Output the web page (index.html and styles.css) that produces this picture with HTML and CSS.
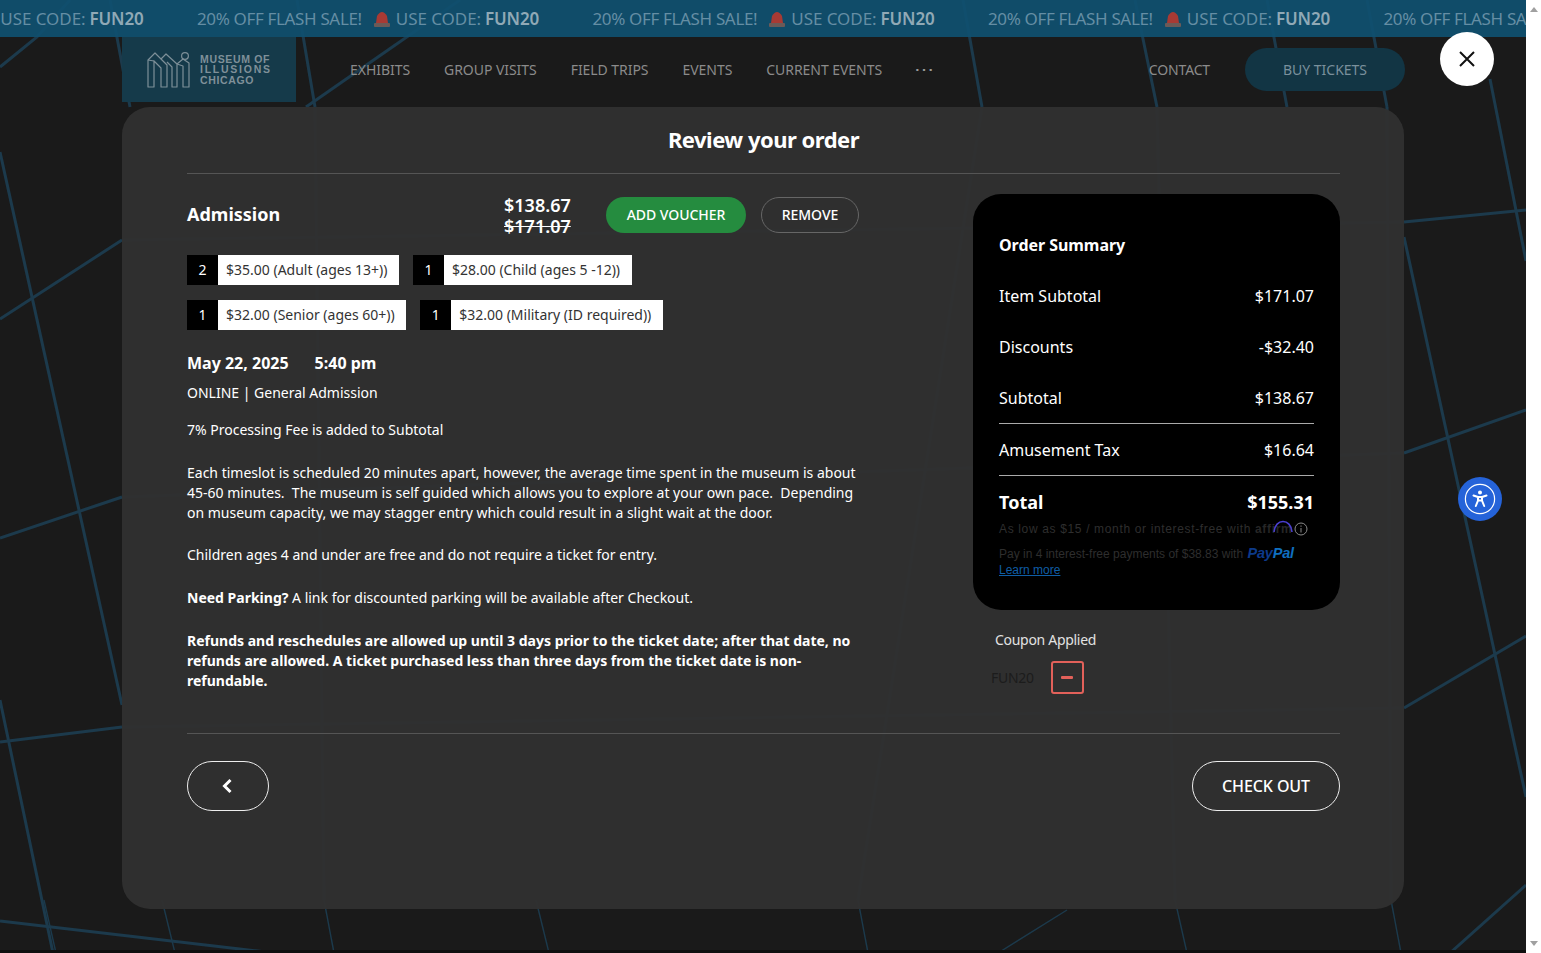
FILE: index.html
```html
<!DOCTYPE html>
<html lang="en">
<head>
<meta charset="utf-8">
<title>Review your order</title>
<link rel="stylesheet" href="styles.css">
</head>
<body>
<div class="window">
  <div class="viewport">
    <svg class="backdrop" viewBox="0 0 1526 953" width="1526" height="953" aria-hidden="true">
      <g class="lines">
        <path d="M0 152 L122 705"/><path d="M0 319 L122 240"/><path d="M0 538 L122 497"/><path d="M0 742 L122 727"/>
        <path d="M0 700 L53 953"/><path d="M0 921 L275 953"/><path d="M0 67 L37 37 L70 0"/>
        <path d="M110 0 L130 107"/><path d="M297 0 L315 107"/><path d="M460 0 L306 107"/>
        <path d="M963 0 L982 107"/><path d="M1135 0 L1157 107"/><path d="M1267 0 L1287 107"/><path d="M1367 0 L1387 107"/>
        <path d="M1490 79 L1526 261"/><path d="M1404 222 L1526 210"/><path d="M1404 237 L1526 797"/>
        <path d="M1404 453 L1526 410"/><path d="M1404 708 L1526 636"/><path d="M1450 953 L1526 885"/>
        <path d="M122 240 L1404 222"/><path d="M122 497 L1404 453"/><path d="M122 727 L1404 708"/>
        <path d="M315 107 L324 900"/><path d="M982 107 L858 900"/><path d="M1157 107 L1175 900"/><path d="M1387 107 L1391 900"/>
      </g>
      <g class="lines-thin">
        <path d="M44 900 L56 953"/><path d="M162 900 L175 953"/><path d="M324 900 L334 953"/><path d="M536 900 L549 953"/>
        <path d="M858 900 L868 953"/><path d="M1067 910 L998 953"/><path d="M1175 900 L1187 953"/><path d="M1391 900 L1401 953"/>
      </g>
    </svg>
    <div class="banner">
      <div class="ticker">
        <span class="tick">20% OFF FLASH SALE!<svg class="siren" viewBox="0 0 18 18"><path d="M3 13 L4 6 Q9 -2 14 6 L15 13 Z" fill="#a83a34"/><rect x="1" y="13" width="16" height="4" rx="1" fill="#6b5a58"/></svg><span class="code">USE CODE:</span><b>FUN20</b></span>
        <span class="tick">20% OFF FLASH SALE!<svg class="siren" viewBox="0 0 18 18"><path d="M3 13 L4 6 Q9 -2 14 6 L15 13 Z" fill="#a83a34"/><rect x="1" y="13" width="16" height="4" rx="1" fill="#6b5a58"/></svg><span class="code">USE CODE:</span><b>FUN20</b></span>
        <span class="tick">20% OFF FLASH SALE!<svg class="siren" viewBox="0 0 18 18"><path d="M3 13 L4 6 Q9 -2 14 6 L15 13 Z" fill="#a83a34"/><rect x="1" y="13" width="16" height="4" rx="1" fill="#6b5a58"/></svg><span class="code">USE CODE:</span><b>FUN20</b></span>
        <span class="tick">20% OFF FLASH SALE!<svg class="siren" viewBox="0 0 18 18"><path d="M3 13 L4 6 Q9 -2 14 6 L15 13 Z" fill="#a83a34"/><rect x="1" y="13" width="16" height="4" rx="1" fill="#6b5a58"/></svg><span class="code">USE CODE:</span><b>FUN20</b></span>
        <span class="tick">20% OFF FLASH SALE!<svg class="siren" viewBox="0 0 18 18"><path d="M3 13 L4 6 Q9 -2 14 6 L15 13 Z" fill="#a83a34"/><rect x="1" y="13" width="16" height="4" rx="1" fill="#6b5a58"/></svg><span class="code">USE CODE:</span><b>FUN20</b></span>
      </div>
    </div>
    <div class="shell">
      <header class="site-header">
        <a class="logo">
          <svg class="logo-mark" viewBox="0 0 44 38" fill="none" stroke="#7d8f98" stroke-width="1.2" stroke-linejoin="round">
            <path d="M1 9 L8 2 L20 14 L20 36 L14 36 L14 17 L7 10 L7 36 L1 36 Z"/>
            <path d="M1 9 L7 10"/>
            <path d="M14 8 L19 3 L30 13 L30 36 L25 36 L25 16 L20 11"/>
            <path d="M30 13 L36 8 L42 12 L42 36 L36 36 L36 15 L30 13"/>
            <circle cx="38" cy="5" r="3.4"/>
          </svg>
          <span class="logo-text"><span class="logo-a">MUSEUM OF</span><span class="logo-b">ILLUSIONS</span><span class="logo-a">CHICAGO</span></span>
        </a>
        <nav class="nav">
          <a>EXHIBITS</a><a>GROUP VISITS</a><a>FIELD TRIPS</a><a>EVENTS</a><a>CURRENT EVENTS</a><span class="dots">&#8943;</span>
        </nav>
        <a class="contact">CONTACT</a>
        <a class="buy">BUY TICKETS</a>
      </header>
      <main class="card">
        <h1 class="title">Review your order</h1>
        <div class="columns">
          <section class="details">
            <div class="item-head">
              <h2 class="item-name">Admission</h2>
              <div class="prices"><span>$138.67</span><s>$171.07</s></div>
              <button class="btn-voucher">ADD VOUCHER</button>
              <button class="btn-remove">REMOVE</button>
            </div>
            <div class="tickets">
              <div class="ticket"><span class="qty">2</span><span class="label">$35.00 (Adult (ages 13+))</span></div>
              <div class="ticket"><span class="qty">1</span><span class="label">$28.00 (Child (ages 5 -12))</span></div>
            </div>
            <div class="tickets">
              <div class="ticket"><span class="qty">1</span><span class="label">$32.00 (Senior (ages 60+))</span></div>
              <div class="ticket"><span class="qty">1</span><span class="label">$32.00 (Military (ID required))</span></div>
            </div>
            <div class="when"><span>May 22, 2025</span><span>5:40 pm</span></div>
            <p class="kind">ONLINE | General Admission</p>
            <div class="notes">
              <p>7% Processing Fee is added to Subtotal</p>
              <p>Each timeslot is scheduled 20 minutes apart, however, the average time spent in the museum is about 45-60 minutes.&nbsp; The museum is self guided which allows you to explore at your own pace.&nbsp; Depending on museum capacity, we may stagger entry which could result in a slight wait at the door.</p>
              <p>Children ages 4 and under are free and do not require a ticket for entry.</p>
              <p><b>Need Parking?</b> A link for discounted parking will be available after Checkout.</p>
              <p><b>Refunds and reschedules are allowed up until 3 days prior to the ticket date; after that date, no refunds are allowed. A ticket purchased less than three days from the ticket date is non-refundable.</b></p>
            </div>
          </section>
          <aside class="side">
            <div class="summary">
              <h3 class="sum-title">Order Summary</h3>
              <div class="sum-row"><span>Item Subtotal</span><span>$171.07</span></div>
              <div class="sum-row"><span>Discounts</span><span>-$32.40</span></div>
              <div class="sum-row ruled"><span>Subtotal</span><span>$138.67</span></div>
              <div class="sum-row ruled tax"><span>Amusement Tax</span><span>$16.64</span></div>
              <div class="sum-total"><span>Total</span><span>$155.31</span></div>
              <p class="affirm">As low as $15 / month or interest-free with <span class="affirm-logo">affirm<svg class="affirm-arc" viewBox="0 0 22 14" fill="none"><path d="M2 12 C3 -2 19 -2 20 12" stroke="#4a3fd0" stroke-width="1.6"/></svg></span><svg class="info" viewBox="0 0 14 14" fill="none" stroke="#8a8a8a"><circle cx="7" cy="7" r="6"/><path d="M7 6 V10.5 M7 3.5 V4.8"/></svg></p>
              <p class="paypal">Pay in 4 interest-free payments of $38.83 with <b class="pp"><i class="pp-a">Pay</i><i class="pp-b">Pal</i></b></p>
              <a class="learn">Learn more</a>
            </div>
            <div class="coupon">
              <div class="coupon-label">Coupon Applied</div>
              <div class="coupon-row"><span class="coupon-code">FUN20</span><button class="coupon-remove" aria-label="Remove coupon"><span></span></button></div>
            </div>
          </aside>
        </div>
        <div class="actions">
          <button class="btn-back" aria-label="Back"><svg viewBox="0 0 12 16" width="12" height="16" fill="none" stroke="#fff" stroke-width="3"><path d="M9.5 2 L3.5 8 L9.5 14"/></svg></button>
          <button class="btn-checkout">CHECK OUT</button>
        </div>
      </main>
    </div>
    <button class="close" aria-label="Close"><svg viewBox="0 0 18 18" width="18" height="18" fill="none" stroke="#111" stroke-width="2"><path d="M2 2 L16 16 M16 2 L2 16"/></svg></button>
    <button class="a11y" aria-label="Accessibility"><svg viewBox="0 0 32 32" width="32" height="32" fill="none" stroke="#fff"><circle cx="16" cy="16" r="14.6" stroke-width="1.2"/><circle cx="16" cy="9.5" r="2" fill="#fff" stroke="none"/><path d="M9.5 12.5 L14 14 L14 17.5 L11.8 23 M22.5 12.5 L18 14 L18 17.5 L20.2 23 M14 14 L18 14 M14.5 17.5 L17.5 17.5" stroke-width="2" stroke-linecap="round"/></svg></button>
  </div>
  <div class="scrollbar"><span class="arrow-up"></span><span class="arrow-down"></span></div>
</div>
</body>
</html>
```

FILE: styles.css
```css
* { box-sizing: border-box; }
html, body { margin: 0; height: 100%; overflow: hidden; background: #fff; }
body { font-family: "Noto Sans", "Open Sans", sans-serif; font-size: 14px; color: #fff; }
button { font-family: inherit; cursor: pointer; }
h1, h2, h3, p { margin: 0; }

.window { display: flex; height: 953px; }
.viewport { position: relative; flex: 1; min-width: 0; height: 953px; overflow: hidden; background: #1a1a1a; }
.viewport::after { content: ""; position: absolute; left: 0; right: 0; bottom: 0; height: 3px; background: #0f0f0f; }
.backdrop { position: absolute; left: 0; top: 0; filter: blur(.7px); }
.lines path { fill: none; stroke: #1c3a4c; stroke-width: 3; }
.lines-thin path { fill: none; stroke: #1c3a4c; stroke-width: 1.4; }

.scrollbar { width: 15px; display: flex; flex-direction: column; justify-content: space-between; align-items: center; padding: 7px 0; background: #fff; }
.arrow-up { border: 4.5px solid transparent; border-top: 0; border-bottom: 5px solid #a0a0a0; }
.arrow-down { border: 4.5px solid transparent; border-bottom: 0; border-top: 5px solid #a0a0a0; }

.banner { position: relative; height: 37px; overflow: hidden; background: rgba(15, 80, 112, .92); }
.ticker { display: flex; margin-left: -198.5px; gap: 53px; width: max-content; height: 37px; align-items: center; }
.tick { display: flex; align-items: center; width: 342.5px; white-space: nowrap; font-size: 17px; letter-spacing: -.35px; color: #658ea4; }
.code { letter-spacing: -.05px; }
.tick b { color: #90a9b6; margin-left: 4px; font-weight: 600; letter-spacing: -.15px; }
.siren { width: 18px; height: 18px; margin: 0 5px 0 11px; flex: none; }

.shell { position: relative; width: 1282px; margin: 0 auto; }
.site-header { display: flex; align-items: flex-start; height: 70px; }
.logo { display: flex; align-items: center; width: 174px; height: 65px; padding-left: 25px; gap: 9px; background: #153a4a; }
.logo-mark { width: 44px; height: 38px; flex: none; }
.logo-text { display: flex; flex-direction: column; font-family: "Liberation Sans", Arial, sans-serif; font-weight: 700; font-size: 10.5px; line-height: 10.5px; color: #7f9099; }
.logo-a { letter-spacing: .65px; }
.logo-b { letter-spacing: 1.75px; }
.nav { display: flex; align-items: center; gap: 34px; margin-left: 54px; height: 65px; color: #8b8b8b; font-size: 14px; letter-spacing: -.05px; }
.dots { font-size: 20px; color: #9a9a9a; letter-spacing: 0; margin: -3px 0 0 -2px; }
.contact { margin-left: auto; height: 65px; display: flex; align-items: center; color: #8b8b8b; font-size: 14px; letter-spacing: -.15px; }
.buy { width: 160px; height: 43px; margin: 11px -1px 0 35px; border-radius: 22px; display: flex; align-items: center; justify-content: center; background: #123544; color: #7a909c; font-size: 14px; letter-spacing: -.02px; }

.card { height: 802px; padding: 0 64px 0 65px; border-radius: 28px; background: rgba(48, 48, 48, .975); }
.title { height: 67px; padding-top: 16px; border-bottom: 1px solid #555; text-align: center; font-size: 22px; line-height: 32px; font-weight: 700; letter-spacing: -.5px; }
.columns { display: flex; justify-content: space-between; height: 560px; border-bottom: 1px solid #555; }
.details { width: 672px; padding-top: 23px; }
.item-head { display: flex; align-items: center; height: 36px; }
.item-name { width: 317px; padding-bottom: 2px; font-size: 18px; line-height: 24px; font-weight: 700; letter-spacing: 0; }
.prices { display: flex; flex-direction: column; width: 102px; margin-top: 2px; font-size: 18px; line-height: 21px; font-weight: 600; letter-spacing: 0; }
.btn-voucher { width: 140px; height: 36px; margin-right: 15px; padding: 0 0 2px; border: 0; border-radius: 18px; background: #258c3f; color: #fff; font-size: 14px; font-weight: 500; letter-spacing: -.05px; }
.btn-remove { width: 98px; height: 36px; padding: 0 0 2px; border: 1px solid #666; border-radius: 18px; background: transparent; color: #fff; font-size: 14px; font-weight: 500; letter-spacing: 0; }
.tickets { display: flex; gap: 14px; margin-top: 15px; }
.item-head + .tickets { margin-top: 22px; }
.ticket { display: flex; height: 30px; line-height: 30px; }
.qty { width: 31px; text-align: center; background: #000; color: #fff; }
.label { padding: 0 11.5px 0 8px; background: #fff; color: #333; letter-spacing: 0; }
.when { display: flex; gap: 26px; margin-top: 22px; font-size: 16px; line-height: 22px; font-weight: 700; letter-spacing: 0; }
.kind { margin-top: 9px; line-height: 20px; letter-spacing: 0; }
.notes { margin-top: 17px; line-height: 20px; letter-spacing: 0; }
.notes p + p { margin-top: 22.7px; }
.notes b { font-weight: 700; }

.side { width: 367px; padding-top: 20px; }
.summary { height: 416px; padding: 38px 26px 0; border-radius: 28px; background: #000; }
.sum-title { font-size: 16px; line-height: 26px; font-weight: 700; letter-spacing: -.05px; }
.sum-row { display: flex; justify-content: space-between; margin-top: 25px; font-size: 16px; line-height: 26px; letter-spacing: 0; }
.sum-row.ruled { padding-bottom: 12px; border-bottom: 1px solid #aaa; }
.sum-row.tax { margin-top: 13px; }
.sum-total { display: flex; justify-content: space-between; margin-top: 13px; font-size: 18px; line-height: 26px; font-weight: 700; letter-spacing: 0; }
.affirm { display: flex; align-items: center; margin-top: 4px; height: 20px; color: #2e2e2e; font-family: "Liberation Sans", Arial, sans-serif; font-size: 12px; letter-spacing: .65px; white-space: pre; }
.affirm-logo { position: relative; color: #262626; font-weight: 700; }
.affirm-arc { position: absolute; right: -2px; top: -2px; width: 22px; height: 14px; }
.info { width: 14px; height: 14px; margin-left: 2px; }
.paypal { margin-top: 6px; height: 16px; line-height: 16px; color: #2e2e2e; font-family: "Liberation Sans", Arial, sans-serif; font-size: 12px; white-space: nowrap; }
.pp { font-size: 14.5px; letter-spacing: -.2px; margin-left: 1px; }
.pp-a { color: #0d3a8a; }
.pp-b { color: #0f6fc0; }
.learn { display: block; margin-top: 2px; font-family: "Liberation Sans", Arial, sans-serif; font-size: 12px; line-height: 14px; color: #0f5ea6; text-decoration: underline; }
.coupon { padding: 19px 0 0 18px; }
.coupon-label { margin-left: 4px; line-height: 22px; letter-spacing: -.3px; color: #e2e2e2; }
.coupon-row { display: flex; align-items: center; gap: 17px; margin-top: 10px; }
.coupon-code { color: #1c1c1c; letter-spacing: -.3px; }
.coupon-remove { display: flex; align-items: center; justify-content: center; width: 33px; height: 33px; padding: 0; border: 2px solid #e2615a; border-radius: 3px; background: transparent; }
.coupon-remove span { width: 12px; height: 3px; border-radius: 1px; background: #e2615a; }
.actions { display: flex; justify-content: space-between; padding-top: 27px; }
.btn-back { display: flex; align-items: center; justify-content: center; width: 82px; height: 50px; padding: 0 2px 0 0; border: 1px solid #eee; border-radius: 25px; background: transparent; }
.btn-checkout { width: 148px; height: 50px; border: 1px solid #eee; border-radius: 25px; background: transparent; color: #fff; font-size: 16px; font-weight: 500; letter-spacing: -.1px; }

.close { position: absolute; left: 1440px; top: 32px; display: flex; align-items: center; justify-content: center; width: 54px; height: 54px; padding: 0; border: 0; border-radius: 50%; background: #fff; }
.a11y { position: absolute; left: 1458px; top: 477px; display: flex; align-items: center; justify-content: center; width: 44px; height: 44px; padding: 0; border: 0; border-radius: 50%; background: #2563d9; }
```
